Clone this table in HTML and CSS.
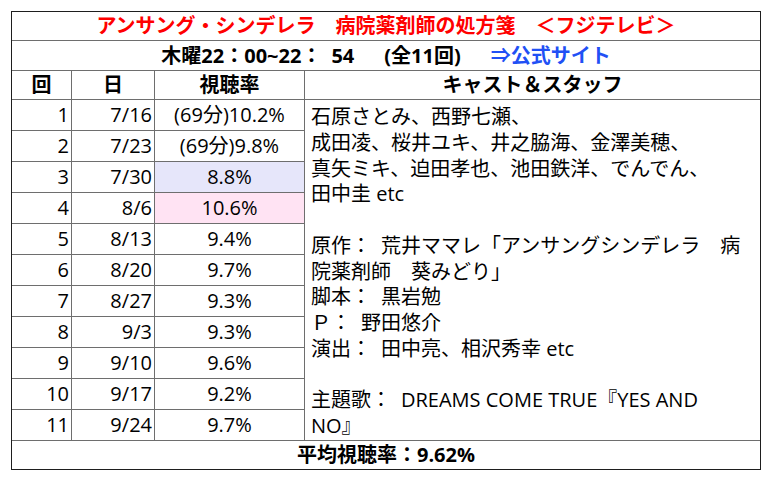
FILE: index.html
```html
<!DOCTYPE html>
<html lang="ja">
<head>
<meta charset="utf-8">
<title>アンサング・シンデレラ　病院薬剤師の処方箋</title>
<link rel="stylesheet" href="styles.css">
</head>
<body>
<div class="wrap">
<table class="ratings">
  <colgroup>
    <col class="c-no">
    <col class="c-date">
    <col class="c-rate">
    <col class="c-cast">
  </colgroup>
  <tr class="r-title"><td colspan="4" class="title">アンサング・シンデレラ　病院薬剤師の処方箋　＜フジテレビ＞</td></tr>
  <tr class="r-info"><td colspan="4" class="info">木曜22：00~22：&ensp;54　&ensp;(全11回)　&ensp;<a class="link" href="#">⇒公式サイト</a></td></tr>
  <tr class="r-head">
    <th>回</th><th>日</th><th>視聴率</th><th class="last">キャスト＆スタッフ</th>
  </tr>
  <tr class="r-data">
    <td class="no">1</td><td class="date">7/16</td><td class="rate">(69分)10.2%</td>
    <td rowspan="11" class="cast">石原さとみ、西野七瀬、<br>成田凌、桜井ユキ、井之脇海、金澤美穂、<br>真矢ミキ、迫田孝也、池田鉄洋、でんでん、<br>田中圭 etc<br><br>原作：&ensp;荒井ママレ「アンサングシンデレラ　病院薬剤師　葵みどり」<br>脚本：&ensp;黒岩勉<br>Ｐ：&ensp;野田悠介<br>演出：&ensp;田中亮、相沢秀幸 etc<br><br>主題歌：&ensp;DREAMS COME TRUE『YES AND<br>NO』</td>
  </tr>
  <tr class="r-data"><td class="no">2</td><td class="date">7/23</td><td class="rate">(69分)9.8%</td></tr>
  <tr class="r-data"><td class="no">3</td><td class="date">7/30</td><td class="rate low">8.8%</td></tr>
  <tr class="r-data"><td class="no">4</td><td class="date">8/6</td><td class="rate high">10.6%</td></tr>
  <tr class="r-data"><td class="no">5</td><td class="date">8/13</td><td class="rate">9.4%</td></tr>
  <tr class="r-data"><td class="no">6</td><td class="date">8/20</td><td class="rate">9.7%</td></tr>
  <tr class="r-data"><td class="no">7</td><td class="date">8/27</td><td class="rate">9.3%</td></tr>
  <tr class="r-data"><td class="no">8</td><td class="date">9/3</td><td class="rate">9.3%</td></tr>
  <tr class="r-data"><td class="no">9</td><td class="date">9/10</td><td class="rate">9.6%</td></tr>
  <tr class="r-data"><td class="no">10</td><td class="date">9/17</td><td class="rate">9.2%</td></tr>
  <tr class="r-data"><td class="no">11</td><td class="date">9/24</td><td class="rate">9.7%</td></tr>
  <tr class="r-avg"><td colspan="4" class="avg">平均視聴率：9.62%</td></tr>
</table>
</div>
</body>
</html>
```
FILE: styles.css
```css
html, body {
  margin: 0;
  padding: 0;
  background: #fff;
}
body {
  font-family: "Open Sans", "Noto Sans CJK JP", sans-serif;
  font-size: 20px;
  color: #000;
}
.wrap {
  margin: 11px 0 0 11px;
  width: 748px;
  border: 1px solid #1e1e1e;
}
.ratings {
  width: 748px;
  table-layout: fixed;
  border-collapse: separate;
  border-spacing: 0;
}
.c-no { width: 60px; }
.c-date { width: 83px; }
.c-rate { width: 150px; }
.c-cast { width: 455px; }

.ratings td, .ratings th {
  padding: 0;
  border-right: 1px solid #6e6e6e;
  border-bottom: 1px solid #6e6e6e;
  white-space: nowrap;
}
.ratings td[colspan], .ratings th.last, .ratings td.cast {
  border-right: none;
}
.ratings .r-avg td {
  border-bottom: none;
}

.r-title td { height: 28px; line-height: 28px; }
.r-info td { height: 29px; line-height: 29px; }
.r-head th { height: 28px; line-height: 28px; font-weight: bold; text-align: center; }
.r-data td { height: 30px; line-height: 30px; }
.r-avg td { height: 28px; line-height: 28px; }

.title {
  color: #ff0000;
  font-weight: bold;
  text-align: center;
}
.info {
  font-weight: bold;
  text-align: center;
}
.link {
  color: #2150f5;
  text-decoration: none;
}
.no, .date {
  text-align: right;
  padding-right: 2px !important;
}
.rate {
  text-align: center;
}
.rate.low { background: #e6e6fa; }
.rate.high { background: #ffe3f3; }

.ratings td.cast {
  vertical-align: top;
  white-space: normal;
  line-height: 25.75px;
  padding: 4px 6px 0 6px;
  height: auto;
}
.avg {
  font-weight: bold;
  text-align: center;
}
```
